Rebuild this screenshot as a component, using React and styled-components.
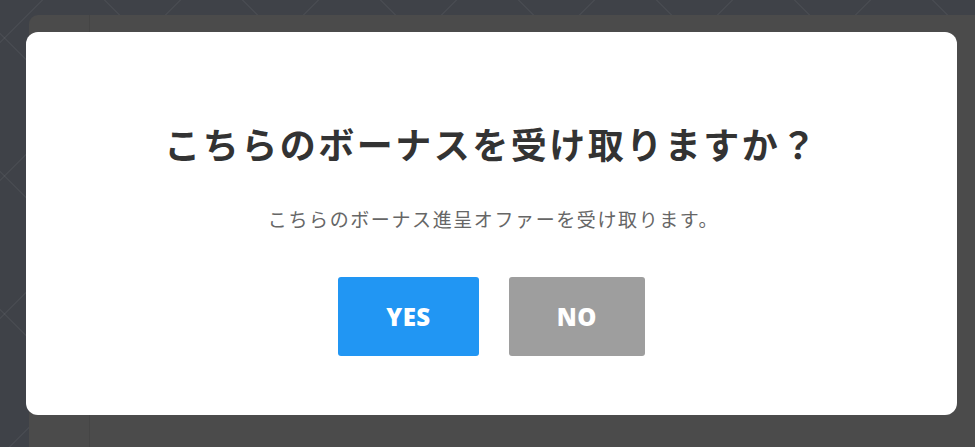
import React from 'react';
import styled, { createGlobalStyle } from 'styled-components';

const GlobalStyle = createGlobalStyle`
  html, body {
    margin: 0;
    padding: 0;
  }
  body {
    font-family: "Noto Sans CJK JP", "Noto Sans", sans-serif;
    background: #3f4248;
  }
`;

// fondo con rombos sutiles
const Page = styled.div`
  width: 975px;
  height: 447px;
  box-sizing: border-box;
  padding: 15px 0 0 29px;
  display: flex;
  overflow: hidden;
  background-color: #3f4248;
  background-image:
    repeating-linear-gradient(45deg, transparent 0 96.6px, rgba(255, 255, 255, 0.045) 96.6px 97.6px),
    repeating-linear-gradient(-45deg, transparent 0 96.6px, rgba(255, 255, 255, 0.045) 96.6px 97.6px);
`;

const Panel = styled.div`
  flex: 1;
  display: flex;
  background: #4b4b4b;
  border-top-left-radius: 9px;
`;

const Sidebar = styled.div`
  width: 60px;
  border-right: 1px solid rgba(0, 0, 0, 0.08);
`;

const Overlay = styled.div`
  position: fixed;
  inset: 0;
  box-sizing: border-box;
  padding: 32px 18px 32px 26px;
  display: flex;
`;

const Dialog = styled.div`
  flex: 1;
  background: #fff;
  border-radius: 12px;
  display: flex;
  flex-direction: column;
  align-items: center;
  padding-top: 90px;
`;

const Title = styled.h2`
  margin: 0;
  font-size: 36px;
  line-height: 43px;
  font-weight: 700;
  letter-spacing: 2.5px;
  color: #333;
`;

const Message = styled.p`
  margin: 40px 0 0 4px;
  font-size: 19px;
  line-height: 27px;
  letter-spacing: 1.6px;
  color: #666;
`;

const Actions = styled.div`
  display: flex;
  gap: 30px;
  margin-top: 45px;
`;

const Button = styled.button`
  height: 79px;
  padding: 0 48px;
  border: none;
  border-radius: 3px;
  background: ${(p) => (p.$variant === 'primary' ? '#2196f3' : '#9e9e9e')};
  color: #fff;
  font-family: "Open Sans", "Liberation Sans", sans-serif;
  font-size: 24px;
  font-weight: 800;
  letter-spacing: 0.5px;
  cursor: pointer;
`;

export default function App() {
  return (
    <>
      <GlobalStyle />
      <Page>
        <Panel>
          <Sidebar />
        </Panel>
      </Page>
      <Overlay>
        <Dialog>
          <Title>こちらのボーナスを受け取りますか？</Title>
          <Message>こちらのボーナス進呈オファーを受け取ります。</Message>
          <Actions>
            <Button $variant="primary">YES</Button>
            <Button>NO</Button>
          </Actions>
        </Dialog>
      </Overlay>
    </>
  );
}
